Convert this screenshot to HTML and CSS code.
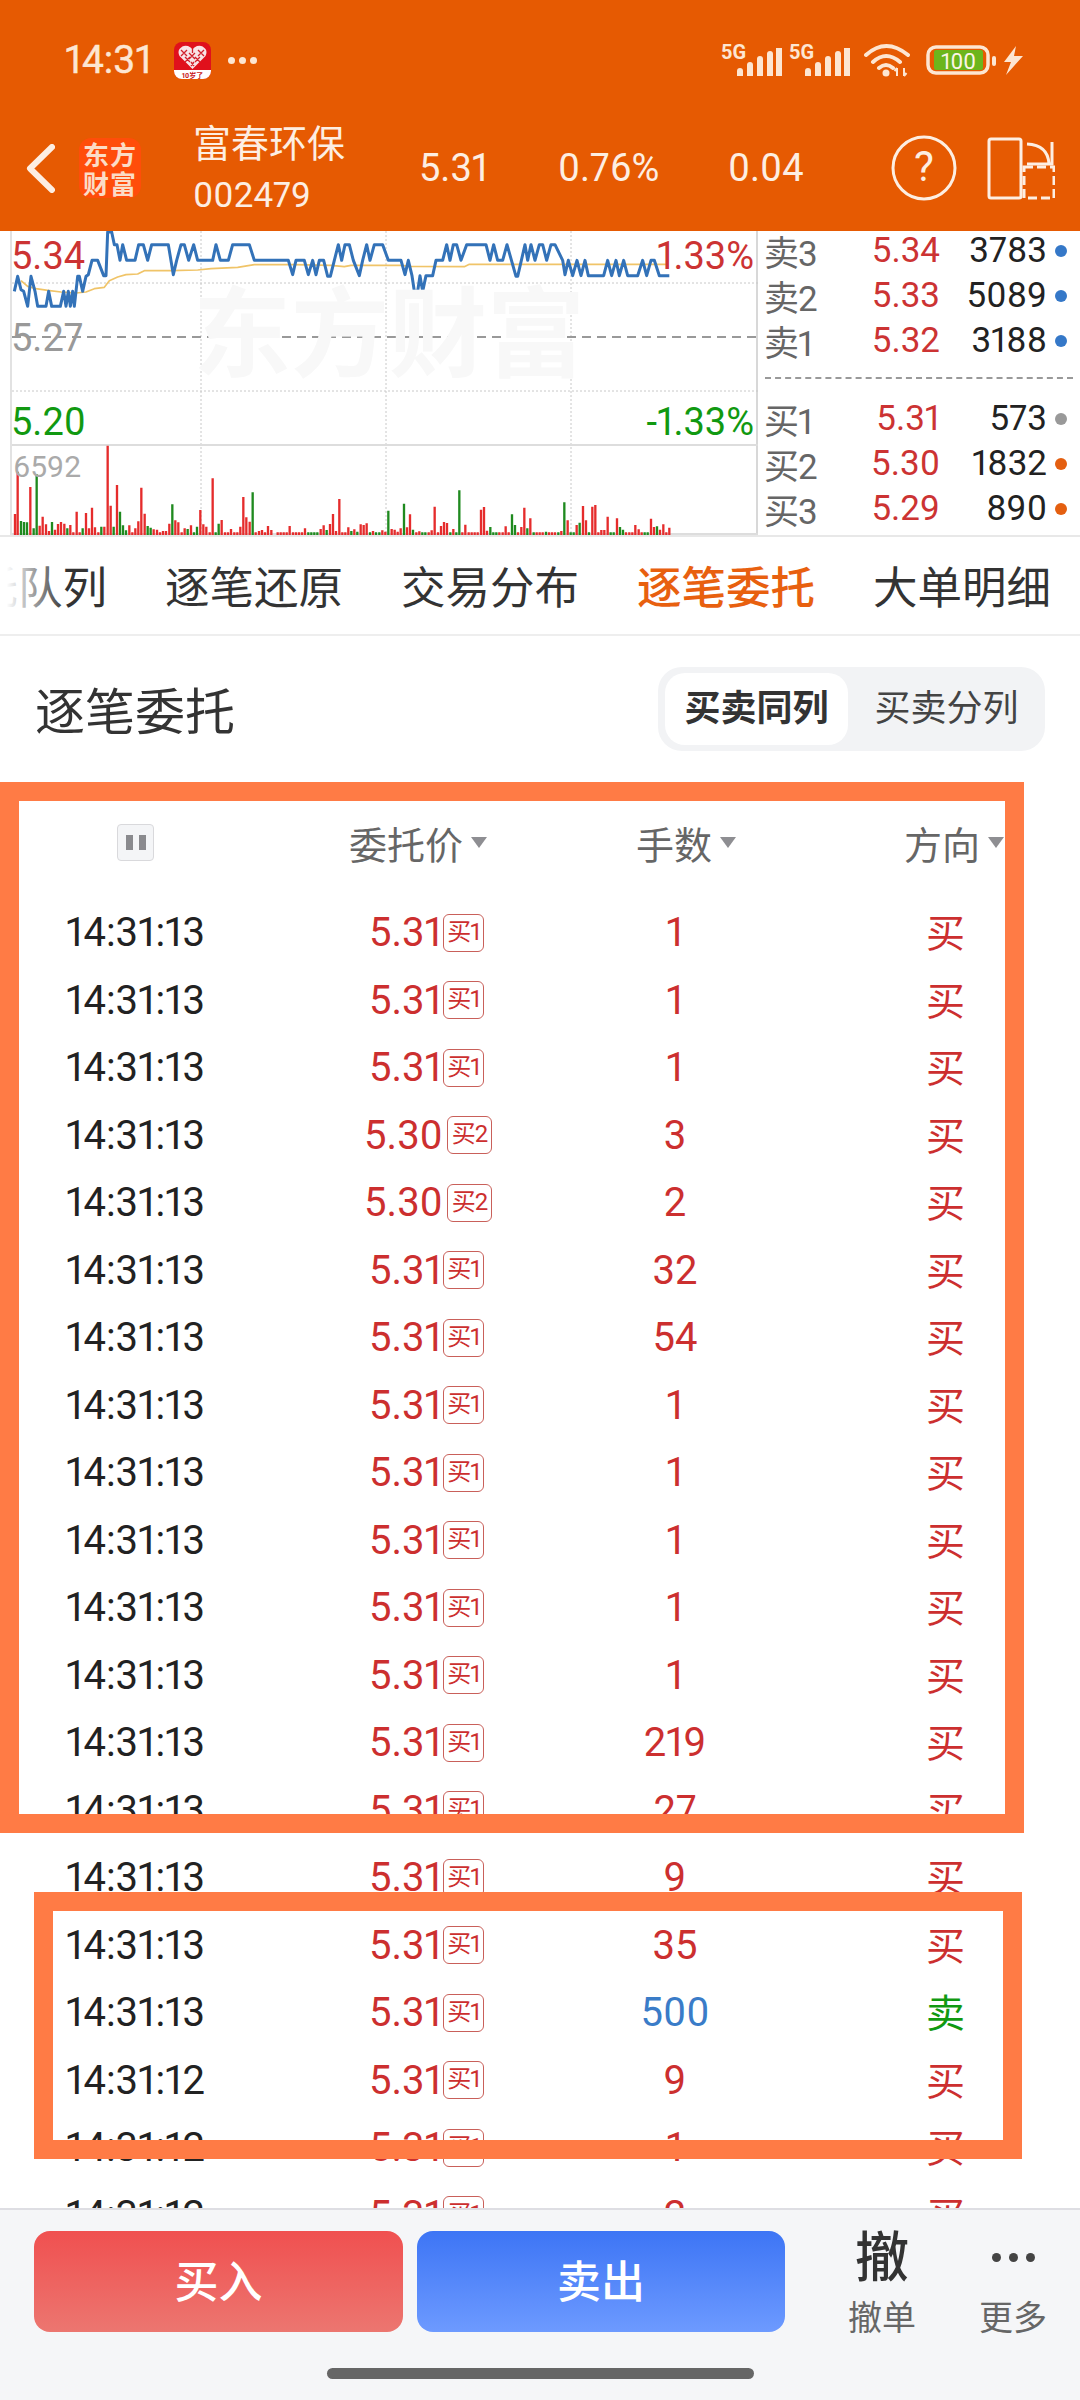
FILE: index.html
```html
<!DOCTYPE html>
<html lang="zh-CN">
<head>
<meta charset="utf-8">
<title>富春环保 逐笔委托</title>
<link rel="stylesheet" href="styles.css">
</head>
<body>
<header class="top">
  <div class="status">
    <span class="clock">14:31</span>
    <svg class="pdd" viewBox="0 0 37 37">
      <rect width="37" height="37" rx="8" fill="#e0101c"/>
      <path d="M0 28H37V29a8 8 0 0 1-8 8H8a8 8 0 0 1-8-8Z" fill="#fff"/>
      <path d="M18.500 27 L5.500 14 Q3.500 10 5.500 7 Q9 2.500 14 4 Q17 5 18.500 7.500 Q20 5 23 4 Q28 2.500 31.500 7 Q33.500 10 31.500 14Z" fill="#f8e4e6"/>
      <path d="M7 8 13 14M13 8 7 14M15 11 21 17M21 11 15 17M24 8 30 14M30 8 24 14M11 15 16 20M16 15 11 20M21 15 26 20M26 15 21 20M17 20 20 24M20 20 17 24M18.500 7V11" stroke="#d0202c" stroke-width="1.300" fill="none"/>
      <text x="18.500" y="35.500" text-anchor="middle" class="pdd-text">10岁了</text>
    </svg>
    <span class="more-dots"><i></i><i></i><i></i></span>
    <span class="status-right">
      <span class="sig"><b>5G</b>
        <svg viewBox="0 0 45 28" class="bars"><path d="M3 28V23M13 28V17M23 28V11M33 28V6M42 28V0" stroke="#fde6d2" stroke-width="6" stroke-linecap="round" fill="none"/></svg>
      </span>
      <span class="sig second"><b>5G</b>
        <svg viewBox="0 0 45 28" class="bars"><path d="M3 28V23M13 28V17M23 28V11M33 28V6M42 28V0" stroke="#fde6d2" stroke-width="6" stroke-linecap="round" fill="none"/></svg>
      </span>
      <svg class="wifi" viewBox="0 0 46 34">
        <path d="M2 12Q22-6 44 12M9 19Q22 7 36 19M15 25Q22 19 29 25" stroke="#fde6d2" stroke-width="4" fill="none" stroke-linecap="round"/>
        <circle cx="22" cy="30" r="3.500" fill="#fde6d2"/>
        <path d="M33 25V33M33 25l-2.500 3M40 25V33M40 33l2.500-3" stroke="#fde6d2" stroke-width="2" fill="none"/>
      </svg>
      <svg class="batt" viewBox="0 0 97 30">
        <rect x="2" y="2" width="60" height="26" rx="8" fill="none" stroke="#fde6d2" stroke-width="3.500"/>
        <rect x="8" y="5" width="49" height="20" rx="2" fill="#6cb51c"/>
        <text x="32.500" y="23.500" text-anchor="middle" class="batt-text">100</text>
        <rect x="66" y="11" width="4" height="10" rx="2" fill="#fde6d2"/>
        <path d="M90 1 78 17H85L80 30 97 11H88Z" fill="#fde6d2"/>
      </svg>
    </span>
  </div>
  <div class="nav">
    <svg class="back" viewBox="0 0 29 49"><path d="M26 3 4 24.500 26 46" stroke="#fdeee2" stroke-width="6" stroke-linecap="round" stroke-linejoin="round" fill="none"/></svg>
    <div class="logo">东方<br>财富</div>
    <div class="stock"><div class="stock-name">富春环保</div><div class="stock-code">002479</div></div>
    <span class="q q-price">5.31</span>
    <span class="q q-pct">0.76%</span>
    <span class="q q-chg">0.04</span>
    <svg class="help" viewBox="0 0 66 66">
      <circle cx="33" cy="33" r="31" stroke="#fdeee2" stroke-width="3" fill="none"/>
      <text x="33" y="46" text-anchor="middle" class="help-text">?</text>
    </svg>
    <svg class="rotate" viewBox="0 0 68 63">
      <rect x="2" y="2" width="32" height="59" rx="2" fill="none" stroke="#fdeee2" stroke-width="3"/>
      <path d="M37 30H67V61H37Z" fill="none" stroke="#fdeee2" stroke-width="3" stroke-dasharray="9 4"/>
      <path d="M40 7Q61 8 62 27M65 5V27H40" fill="none" stroke="#fdeee2" stroke-width="3"/>
    </svg>
  </div>
</header>

<section class="quote">
  <div class="chart">
    <svg class="chart-svg" viewBox="0 231 746 304">
      <path d="M189 231V535M374 231V535M559 231V535" stroke="#c8c8c8" stroke-width="1" stroke-dasharray="2 2"/>
      <path d="M0 283H746M0 391H746" stroke="#c8c8c8" stroke-width="1" stroke-dasharray="2 2"/>
      <path d="M0 337H746" stroke="#999" stroke-width="2" stroke-dasharray="9 6"/>
      <path d="M0 445H746" stroke="#ddd" stroke-width="2"/>
      <path d="M0 534H746" stroke="#ddd" stroke-width="2"/>
      <g transform="translate(-1 228) scale(.33333)" fill="none" stroke-linejoin="round">
        <polyline stroke="#f0c468" stroke-width="5" points="30,158 50,175 75,182 110,187 150,192 195,195 225,192 250,182 280,178 295,158 320,147 345,140 380,138 400,128 480,128 560,126 600,122 680,118 730,110 850,110 960,112 1000,116 1020,112 1170,112 1200,115 1360,116 1375,109 1970,109"/>
        <polyline stroke="#3372b8" stroke-width="9" points="10,190 20,145 30,185 38,190 50,235 60,145 72,190 80,235 105,235 113,190 122,235 148,235 158,190 165,235 172,190 178,235 185,190 190,235 200,145 205,145 215,190 225,145 232,140 243,97 260,97 278,143 285,143 290,12 302,12 310,50 318,50 327,97 335,50 347,97 372,97 383,50 397,50 410,97 422,50 472,50 487,140 497,97 510,50 520,50 533,97 548,50 560,97 605,97 615,50 628,97 652,97 665,50 715,50 730,97 832,97 845,140 855,97 880,97 892,140 905,97 915,140 925,97 938,97 950,145 958,145 970,97 982,50 992,97 1002,50 1015,50 1027,97 1045,143 1055,97 1067,50 1077,97 1090,50 1115,50 1132,97 1170,97 1182,140 1192,97 1203,143 1210,190 1220,190 1227,143 1235,190 1245,143 1265,143 1275,97 1295,97 1307,50 1317,97 1327,50 1337,50 1350,97 1367,50 1425,50 1437,97 1448,50 1460,97 1475,97 1488,50 1515,145 1520,145 1542,50 1550,97 1560,50 1572,97 1585,50 1595,50 1607,97 1620,50 1632,50 1655,97 1662,140 1672,97 1685,143 1698,97 1710,143 1722,97 1732,143 1778,143 1790,97 1802,143 1815,97 1825,143 1838,97 1850,143 1880,143 1895,97 1907,143 1920,97 1930,97 1945,143 1975,143"/>
      </g>
      <g transform="translate(-1 445) scale(.33333)" fill="none" stroke-width="7">
        <path stroke="#e52c2c" d="M12 207V270M20 80V270M58 126V270M86 242V270M95 215V270M105 238V270M114 258V270M132 254V270M141 237V270M150 231V270M160 236V270M178 240V270M187 262V270M197 200V270M206 262V270M225 204V270M234 250V270M243 188V270M252 247V270M262 262V270M280 245V270M290 2V270M299 182V270M318 120V270M355 241V270M364 262V270M373 250V270M382 229V270M391 128V270M401 206V270M428 253V270M438 254V270M447 262V270M456 258V270M465 258V270M475 236V270M493 226V270M502 232V270M512 262V270M521 250V270M540 241V270M568 195V270M577 238V270M586 245V270M596 262V270M605 100V270M632 225V270M642 262V270M651 262V270M660 252V270M670 262V270M679 262V270M688 245V270M697 156V270M706 217V270M716 230V270M734 262V270M744 258V270M753 255V270M762 262V270M771 243V270M781 255V270M800 262V270M809 262V270M818 262V270M827 262V270M836 243V270M846 262V270M855 262V270M864 262V270M873 262V270M882 250V270M929 252V270M938 241V270M957 237V270M966 207V270M975 258V270M985 162V270M994 262V270M1003 262V270"/>
        <path stroke="#1f8a1f" d="M30 228V270M39 231V270M48 232V270M68 250V270M77 88V270M123 231V270M169 250V270M215 250V270M271 245V270M308 245V270M327 200V270M336 241V270M345 256V270M410 243V270M419 248V270M484 178V270M530 252V270M549 262V270M558 245V270M614 262V270M623 236V270M725 142V270M892 262V270M901 262V270M910 262V270M919 262V270M947 255V270"/>
      </g>
      <g transform="translate(334 445) scale(.33333)" fill="none" stroke-width="7">
        <path stroke="#e52c2c" d="M7 247V270M25 253V270M44 238V270M53 240V270M62 235V270M81 258V270M109 256V270M118 260V270M137 252V270M146 254V270M155 260V270M164 250V270M183 247V270M192 208V270M211 262V270M220 259V270M248 262V270M257 256V270M266 185V270M276 262V270M285 243V270M294 231V270M303 234V270M322 252V270M349 262V270M358 239V270M368 262V270M377 262V270M386 262V270M395 262V270M405 194V270M414 186V270M423 257V270M460 262V270M470 262V270M479 244V270M488 262V270M516 262V270M526 246V270M535 188V270M553 220V270M572 262V270M581 262V270M590 262V270M609 262V270M618 262V270M627 262V270M646 258V270M665 226V270M692 240V270M711 183V270M720 226V270M739 185V270M748 180V270M757 262V270M766 255V270M775 255V270M785 215V270M813 220V270M840 262V270M850 262V270M859 262V270M868 240V270M878 253V270M887 262V270M915 221V270M924 246V270M942 254V270M952 238V270M961 262V270M970 248V270"/>
        <path stroke="#1f8a1f" d="M16 258V270M34 260V270M72 262V270M90 262V270M100 262V270M127 197V270M174 176V270M201 254V270M229 262V270M238 262V270M313 262V270M331 262V270M340 136V270M433 246V270M442 262V270M451 262V270M498 208V270M507 240V270M544 250V270M563 262V270M600 260V270M637 262V270M655 172V270M674 262V270M683 262V270M701 233V270M729 262V270M794 262V270M803 262V270M822 246V270M831 254V270M896 262V270M905 262V270M933 244V270"/>
      </g>
    </svg>
    <div class="watermark">东方财富</div>
    <span class="cl cl-hi-l">5.34</span>
    <span class="cl cl-hi-r">1.33%</span>
    <span class="cl cl-mid">5.27</span>
    <span class="cl cl-lo-l">5.20</span>
    <span class="cl cl-lo-r">-1.33%</span>
    <span class="cl cl-vol">6592</span>
  </div>
  <div class="book">
    <div class="book-group">
      <div class="level"><span class="lv">卖3</span><span class="lp">5.34</span><span class="lq">3783</span><i class="dot d-blue"></i></div>
      <div class="level"><span class="lv">卖2</span><span class="lp">5.33</span><span class="lq">5089</span><i class="dot d-blue"></i></div>
      <div class="level"><span class="lv">卖1</span><span class="lp">5.32</span><span class="lq">3188</span><i class="dot d-blue"></i></div>
    </div>
    <div class="book-sep"></div>
    <div class="book-group">
      <div class="level"><span class="lv">买1</span><span class="lp">5.31</span><span class="lq">573</span><i class="dot d-gray"></i></div>
      <div class="level"><span class="lv">买2</span><span class="lp">5.30</span><span class="lq">1832</span><i class="dot d-orange"></i></div>
      <div class="level"><span class="lv">买3</span><span class="lp">5.29</span><span class="lq">890</span><i class="dot d-orange"></i></div>
    </div>
  </div>
</section>

<nav class="tabs">
  <span class="tab">委托队列</span>
  <span class="tab">逐笔还原</span>
  <span class="tab">交易分布</span>
  <span class="tab active">逐笔委托</span>
  <span class="tab">大单明细</span>
  <i class="tab-fade"></i>
</nav>

<main class="panel">
  <div class="title-row">
    <h1 class="title">逐笔委托</h1>
    <div class="toggle"><span class="tg on">买卖同列</span><span class="tg">买卖分列</span></div>
  </div>
  <div class="thead">
    <div class="c-time"><span class="pause"><i></i><i></i></span></div>
    <div class="c-price th">委托价<i class="tri"></i></div>
    <div class="c-vol th">手数<i class="tri"></i></div>
    <div class="th th-dir">方向<i class="tri"></i></div>
  </div>
  <div class="rows">
    <div class="row"><span class="c-time">14:31:13</span><span class="c-price"><b>5.31</b><em>买1</em></span><span class="c-vol">1</span><span class="c-dir">买</span></div>
    <div class="row"><span class="c-time">14:31:13</span><span class="c-price"><b>5.31</b><em>买1</em></span><span class="c-vol">1</span><span class="c-dir">买</span></div>
    <div class="row"><span class="c-time">14:31:13</span><span class="c-price"><b>5.31</b><em>买1</em></span><span class="c-vol">1</span><span class="c-dir">买</span></div>
    <div class="row"><span class="c-time">14:31:13</span><span class="c-price"><b>5.30</b><em class="wide">买2</em></span><span class="c-vol">3</span><span class="c-dir">买</span></div>
    <div class="row"><span class="c-time">14:31:13</span><span class="c-price"><b>5.30</b><em class="wide">买2</em></span><span class="c-vol">2</span><span class="c-dir">买</span></div>
    <div class="row"><span class="c-time">14:31:13</span><span class="c-price"><b>5.31</b><em>买1</em></span><span class="c-vol">32</span><span class="c-dir">买</span></div>
    <div class="row"><span class="c-time">14:31:13</span><span class="c-price"><b>5.31</b><em>买1</em></span><span class="c-vol">54</span><span class="c-dir">买</span></div>
    <div class="row"><span class="c-time">14:31:13</span><span class="c-price"><b>5.31</b><em>买1</em></span><span class="c-vol">1</span><span class="c-dir">买</span></div>
    <div class="row"><span class="c-time">14:31:13</span><span class="c-price"><b>5.31</b><em>买1</em></span><span class="c-vol">1</span><span class="c-dir">买</span></div>
    <div class="row"><span class="c-time">14:31:13</span><span class="c-price"><b>5.31</b><em>买1</em></span><span class="c-vol">1</span><span class="c-dir">买</span></div>
    <div class="row"><span class="c-time">14:31:13</span><span class="c-price"><b>5.31</b><em>买1</em></span><span class="c-vol">1</span><span class="c-dir">买</span></div>
    <div class="row"><span class="c-time">14:31:13</span><span class="c-price"><b>5.31</b><em>买1</em></span><span class="c-vol">1</span><span class="c-dir">买</span></div>
    <div class="row"><span class="c-time">14:31:13</span><span class="c-price"><b>5.31</b><em>买1</em></span><span class="c-vol">219</span><span class="c-dir">买</span></div>
    <div class="row"><span class="c-time">14:31:13</span><span class="c-price"><b>5.31</b><em>买1</em></span><span class="c-vol">27</span><span class="c-dir">买</span></div>
    <div class="row"><span class="c-time">14:31:13</span><span class="c-price"><b>5.31</b><em>买1</em></span><span class="c-vol">9</span><span class="c-dir">买</span></div>
    <div class="row"><span class="c-time">14:31:13</span><span class="c-price"><b>5.31</b><em>买1</em></span><span class="c-vol">35</span><span class="c-dir">买</span></div>
    <div class="row"><span class="c-time">14:31:13</span><span class="c-price"><b>5.31</b><em>买1</em></span><span class="c-vol blue">500</span><span class="c-dir green">卖</span></div>
    <div class="row"><span class="c-time">14:31:12</span><span class="c-price"><b>5.31</b><em>买1</em></span><span class="c-vol">9</span><span class="c-dir">买</span></div>
    <div class="row"><span class="c-time">14:31:12</span><span class="c-price"><b>5.31</b><em>买1</em></span><span class="c-vol">1</span><span class="c-dir">买</span></div>
    <div class="row"><span class="c-time">14:31:12</span><span class="c-price"><b>5.31</b><em>买1</em></span><span class="c-vol">2</span><span class="c-dir">买</span></div>
  </div>
</main>

<footer class="foot">
  <div class="foot-row">
    <button class="btn buy">买入</button>
    <button class="btn sell">卖出</button>
    <div class="act act-cancel"><span class="act-icon">撤</span><span class="act-label">撤单</span></div>
    <div class="act act-more"><span class="act-dots"><i></i><i></i><i></i></span><span class="act-label">更多</span></div>
  </div>
  <div class="home-bar"></div>
</footer>

<div class="mark mark-a"></div>
<div class="mark mark-b"></div>
</body>
</html>
```

FILE: styles.css
```css
* { box-sizing: border-box; }
html, body { margin: 0; padding: 0; }
body {
  width: 1080px;
  height: 2400px;
  position: relative;
  overflow: hidden;
  background: #fff;
  display: flex;
  flex-direction: column;
  font-family: Roboto, "Noto Sans CJK SC", sans-serif;
  font-variant-numeric: proportional-nums;
  color: #222;
}
i, em, b { font-style: normal; font-weight: inherit; display: block; }

/* header */
.top { height: 231px; background: #e65a02; color: #fdeee2; flex: none; }
.status { height: 120px; display: flex; align-items: center; padding-left: 65px; }
.clock { font-size: 39px; font-weight: 400; -webkit-text-stroke: 0.4px #fde6d2; color: #fde6d2; width: 109px; }
.pdd { width: 37px; height: 37px; }
.pdd-text { font-size: 7px; font-weight: 700; fill: #c81420; }
.more-dots { display: flex; gap: 4px; margin-left: 17px; }
.more-dots i { width: 7px; height: 7px; border-radius: 50%; background: #fde6d2; }
.status-right { margin-left: auto; display: flex; align-items: center; margin-right: 57px; }
.sig { position: relative; display: block; width: 62px; height: 32px; margin-right: 6px; }
.sig b { position: absolute; left: 1px; top: -2px; font-size: 20px; font-weight: 700; line-height: 20px; color: #fde6d2; }
.bars { position: absolute; left: 17px; top: 4px; width: 45px; height: 28px; }
.wifi { width: 46px; height: 34px; margin-left: 8px; margin-top: 0; }
.batt { width: 97px; height: 30px; margin-left: 16px; }
.batt-text { font-size: 22px; fill: #fdf5e6; font-family: Roboto, sans-serif; }

.nav { height: 96px; position: relative; display: flex; align-items: center; padding-left: 26px; }
.back { width: 29px; height: 49px; }
.logo {
  width: 62px; height: 60px; margin-left: 24px; border-radius: 12px;
  background: #ff4d0a; color: #fbdcc6;
  font-family: "Noto Sans CJK SC", sans-serif; font-weight: 700; font-size: 26px; line-height: 29px;
  text-align: center; padding-top: 1px; letter-spacing: 1px; white-space: nowrap;
}
.stock { width: 227px; margin-left: 52px; }
.stock-name { font-size: 38px; line-height: 50px; }
.stock-code { font-size: 35px; line-height: 42px; margin-top: 6px; }
.q { font-size: 38px; }
.q-price { width: 139px; margin-left: -1px; }
.q-pct { width: 171px; }
.q-chg { width: 161px; margin-left: -1px; }
.help { width: 66px; height: 66px; margin-left: 2px; }
.help-text { font-size: 42px; fill: #fdeee2; }
.rotate { width: 68px; height: 63px; margin-left: 30px; }

/* quote */
.quote { height: 306px; display: flex; border-bottom: 2px solid #e8e8e8; flex: none; }
.chart { position: relative; width: 748px; height: 304px; border-left: 2px solid #e2e2e2; border-right: 2px solid #d8d8d8; margin-left: 10px; }
.chart-svg { display: block; width: 746px; height: 304px; }
.cl { position: absolute; font-size: 38px; line-height: 40px; }
.cl-hi-l { left: -1px; top: 5px; color: #cc3333; }
.cl-hi-r { right: 2px; top: 5px; color: #cc3333; }
.cl-mid { left: -1px; top: 87px; color: #999; }
.cl-lo-l { left: -1px; top: 171px; color: #119911; }
.cl-lo-r { right: 2px; top: 171px; color: #119911; }
.cl-vol { left: 1px; top: 216px; font-size: 30px; color: #aaa; }
.watermark {
  position: absolute; left: 181px; top: 53px;
  font-size: 98px; line-height: 104px; font-weight: 700; color: #f8f8f8; white-space: nowrap;
}
.book { flex: 1; padding: 0 0 0 6px; margin-top: -3px; display: flex; flex-direction: column; overflow: visible; }
.book-group { display: flex; flex-direction: column; }
.level { height: 45px; display: flex; align-items: center; font-size: 35px; }
.lv { width: 61px; color: #666; letter-spacing: -1px; white-space: nowrap; }
.lp { width: 115px; text-align: right; color: #cc3333; }
.lq { width: 107px; text-align: right; color: #222; }
.dot { width: 12px; height: 12px; border-radius: 50%; margin-left: 8px; }
.d-blue { background: #3578c8; }
.d-gray { background: #999; }
.d-orange { background: #e45f10; }
.book-sep { height: 0; margin: 14px 7px 17px 1px; border-top: 2px dashed #999; }

/* tabs */
.tabs {
  height: 99px; flex: none; position: relative; overflow: hidden;
  display: flex; gap: 58px; padding-top: 22px;
  border-bottom: 2px solid #eee;
}
.tab { font-size: 44.500px; line-height: 60px; white-space: nowrap; flex: none; color: #333; transform: translateX(-71px); }
.tab.active { color: #e8600f; font-weight: 500; position: relative; }
.tab.active::after {
  content: ""; position: absolute; left: 69px; bottom: -15px; width: 39px; height: 6px;
  border-radius: 3px; background: #e65a02;
}
.tab-fade { position: absolute; left: 0; top: 0; bottom: 0; width: 66px; background: linear-gradient(90deg, #fff 10%, rgba(255,255,255,0)); }

/* panel */
.panel { flex: 1; min-height: 0; overflow: hidden; }
.title-row { height: 146px; display: flex; align-items: center; justify-content: space-between; padding: 0 35px 0 35px; }
.title { margin: 0 0 2px; font-size: 50px; font-weight: 400; color: #333; }
.toggle { width: 387px; height: 84px; background: #f2f3f5; border-radius: 24px; display: flex; padding: 6px 0 6px 7px; }
.tg { width: 190px; font-size: 36px; line-height: 72px; text-align: center; color: #444; }
.tg.on { width: 183px; background: #fff; border-radius: 20px; font-weight: 700; color: #333; }
.tg:last-child { width: 197px; }

.thead, .row { display: grid; grid-template-columns: 268px 320px 174px 1fr; align-items: center; }
.thead { height: 117px; padding-top: 3px; }
.thead .c-time { display: flex; justify-content: flex-start; padding-left: 117px; }
.pause { width: 37px; height: 37px; background: #f4f5f7; border: 1px solid #d9d9dc; border-radius: 4px; display: flex; align-items: center; justify-content: center; gap: 6px; }
.pause i { width: 7px; height: 15px; background: #8a8a8e; }
.th { display: flex; align-items: center; justify-content: center; font-size: 38px; color: #666; gap: 8px; white-space: nowrap; }
.thead .c-price { padding-right: 20px; }
.thead .c-vol { padding-left: 22px; }
.th-dir { justify-content: flex-start; padding-left: 142px; }
.tri { width: 0; height: 0; border-left: 8px solid transparent; border-right: 8px solid transparent; border-top: 11px solid #8e8e92; }

.row { height: 67.500px; font-size: 40px; color: #cc2f2f; }
.row .c-time { color: #222; text-align: center; padding-left: 3px; }
.row .c-price { display: flex; align-items: center; justify-content: center; gap: 4px; }
.row em {
  width: 41px; height: 38px; border: 1.500px solid #c9605a; border-radius: 6px; margin: 0 3px 0 -3px;
  font-size: 24px; line-height: 35px; text-align: center; letter-spacing: -1px; white-space: nowrap;
}
.row em.wide { width: 45px; margin: 0; }
.row .c-vol { text-align: center; }
.row .c-dir { font-size: 39px; padding-left: 164px; padding-bottom: 5px; }
.row .blue { color: #3a7cc8; }
.row .green { color: #119911; }

/* footer */
.foot { height: 192px; flex: none; background: #f5f6f8; border-top: 2px solid #dedee3; }
.foot-row { display: flex; height: 101px; margin-top: 21px; padding-left: 34px; align-items: flex-start; }
.btn { width: 369px; height: 101px; border: 0; border-radius: 16px; font: inherit; font-size: 44px; font-weight: 500; color: #fff; padding: 0 0 5px; }
.buy { background: linear-gradient(180deg, #f05050, #ec7670); }
.sell { width: 368px; margin-left: 14px; background: linear-gradient(180deg, #3d75f5, #6d9aff); }
.act { display: flex; flex-direction: column; align-items: center; width: 70px; flex: none; }
.act-cancel { margin-left: 62px; }
.act-more { margin-left: 61px; }
.act-icon { font-size: 54px; line-height: 54px; font-weight: 500; color: #333; height: 64px; margin-top: 1px; }
.act-dots { height: 65px; display: flex; gap: 8px; padding-top: 22px; }
.act-dots i { width: 9px; height: 9px; border-radius: 50%; background: #444; }
.act-label { font-size: 34px; line-height: 44px; color: #666; white-space: nowrap; }
.home-bar { width: 427px; height: 11px; border-radius: 6px; background: #666; margin: 36px auto 0; }

/* annotation boxes drawn over the page */
.mark { position: absolute; border: 19px solid #ff7b45; }
.mark-a { left: 0; top: 782px; width: 1024px; height: 1051px; }
.mark-b { left: 34px; top: 1892px; width: 988px; height: 267px; }
```
